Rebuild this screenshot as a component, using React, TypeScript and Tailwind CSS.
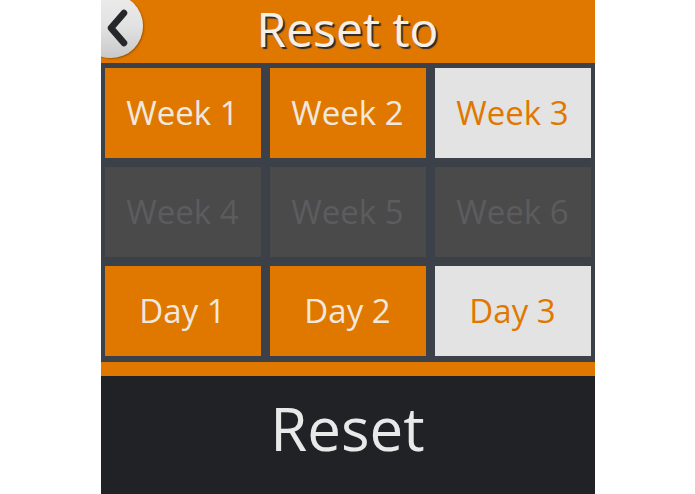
import React from "react"

type Cell = { label: string; kind: "on" | "off" | "sel" }

const rows: Cell[][] = [
  [
    { label: "Week 1", kind: "on" },
    { label: "Week 2", kind: "on" },
    { label: "Week 3", kind: "sel" },
  ],
  [
    { label: "Week 4", kind: "off" },
    { label: "Week 5", kind: "off" },
    { label: "Week 6", kind: "off" },
  ],
  [
    { label: "Day 1", kind: "on" },
    { label: "Day 2", kind: "on" },
    { label: "Day 3", kind: "sel" },
  ],
]

const cellStyles = {
  on: "bg-[#e07800] text-[#f0e8df]",
  off: "bg-[#4a4a4b] text-[#5c5c5e]",
  sel: "bg-[#e3e3e3] text-[#e07800]",
}

export default function App() {
  return (
    <div className="flex h-[494px] w-full justify-center bg-white font-['Open_Sans',sans-serif]">
      <div className="flex w-[494px] flex-col overflow-hidden bg-[#212226]">
        <div className="relative flex h-[63px] items-start justify-center bg-[#e07800] pt-[1px]">
          {/* back button, half off the left edge */}
          <div className="absolute left-[-22px] top-[-6px] h-[64px] w-[64px] rounded-full bg-gradient-to-b from-[#ececec] via-[#e2e2e2] to-[#c9c9c9] shadow-[1px_1px_2px_rgba(0,0,0,0.3)]" />
          <svg className="absolute left-[4px] top-[9px]" width="24" height="38" viewBox="0 0 24 38">
            <path d="M19 4 L6 19 L19 34" fill="none" stroke="#26272a" strokeWidth="6.5" strokeLinecap="round" strokeLinejoin="round" />
          </svg>
          <span className="text-[48px] leading-[1.15] text-[#f5efe8] [text-shadow:2px_2px_1px_#2a2a2a]">
            Reset to
          </span>
        </div>
        <div className="flex flex-col gap-[9px] bg-[#3c4049] px-[4px] pb-[6px] pt-[5px]">
          {rows.map((row, i) => (
            <div key={i} className="grid h-[90px] grid-cols-3 gap-[9px]">
              {row.map((c) => (
                <div key={c.label} className={`flex items-center justify-center text-[33px] ${cellStyles[c.kind]}`}>
                  {c.label}
                </div>
              ))}
            </div>
          ))}
        </div>
        <div className="h-[14px] bg-[#e07800]" />
        <div className="flex flex-1 items-center justify-center pb-[14px] text-[60px] text-[#e9e9e9]">
          Reset
        </div>
      </div>
    </div>
  )
}
